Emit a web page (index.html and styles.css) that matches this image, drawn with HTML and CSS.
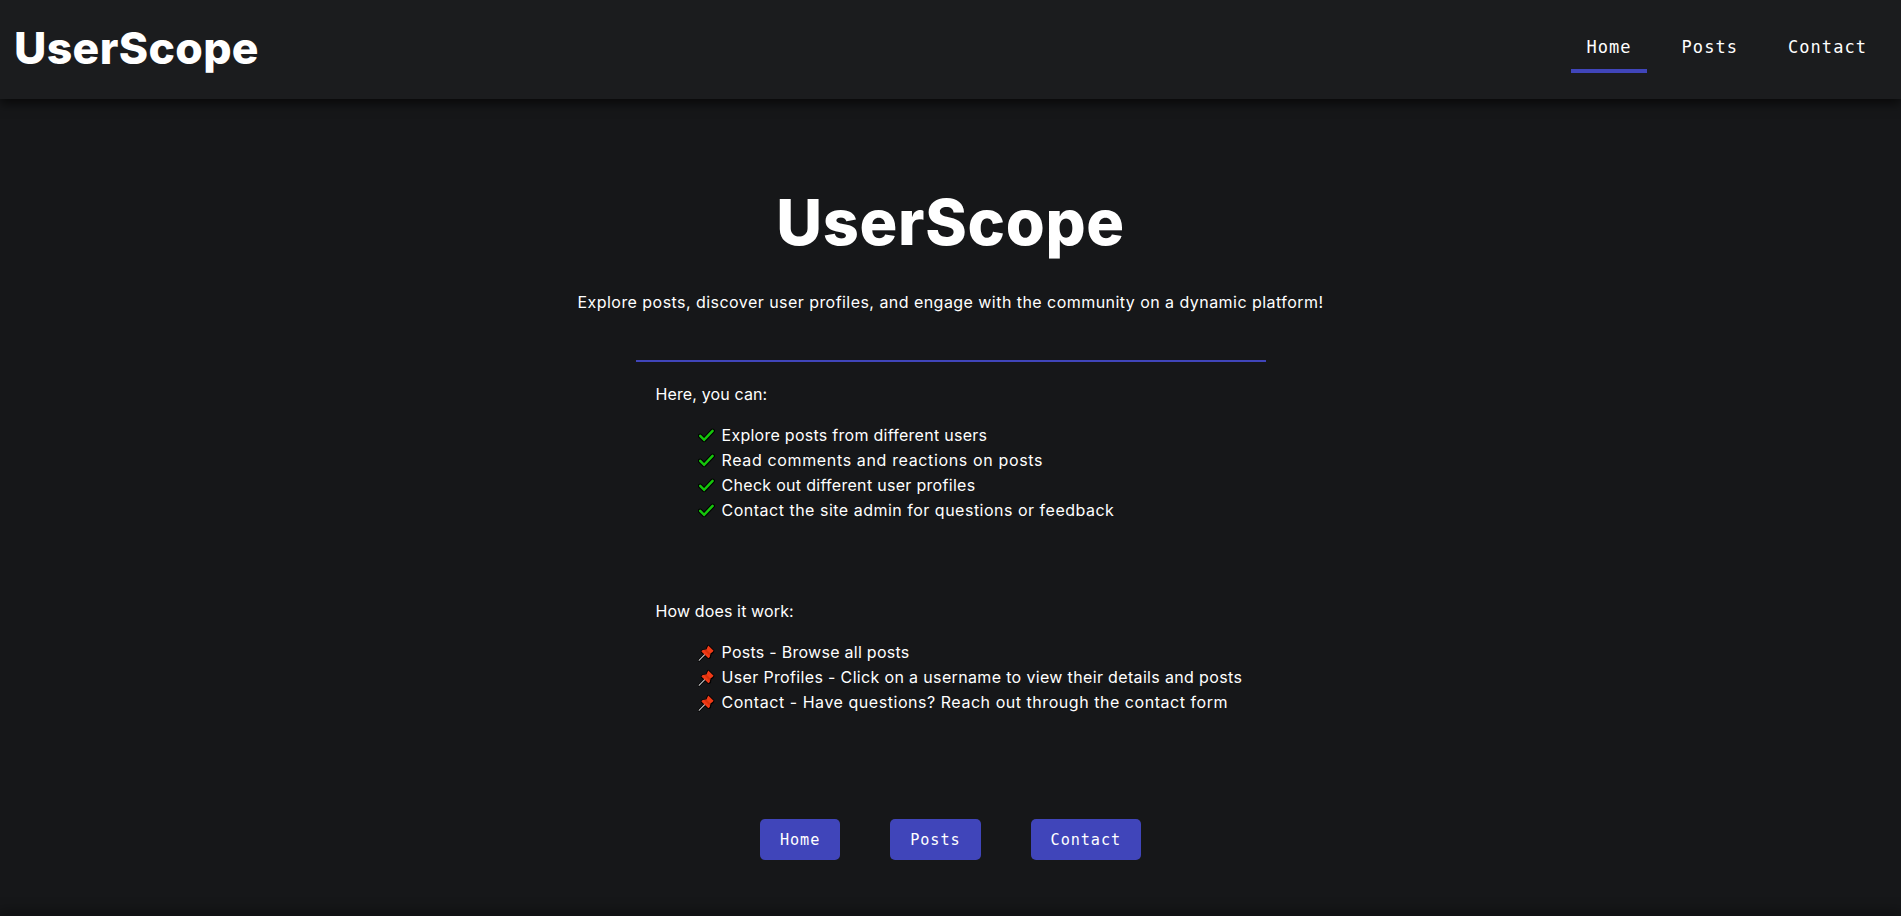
FILE: index.html
```
<!DOCTYPE html>
<html lang="en">
<head>
<meta charset="utf-8">
<title>UserScope</title>
<link rel="stylesheet" href="styles.css">
</head>
<body>
<svg class="defs" aria-hidden="true">
  <symbol id="check" viewBox="0 0 18 16">
    <path d="M2.2 7.9 6.1 11.8 14.6 2.9" fill="none" stroke="#000" stroke-width="4.6" stroke-linejoin="round" stroke-linecap="round"/>
    <path d="M2.2 7.9 6.1 11.8 14.6 2.9" fill="none" stroke="#16c60c" stroke-width="2.5" stroke-linecap="round"/>
  </symbol>
  <symbol id="pin" viewBox="0 0 18 18">
    <path d="M10.3 1.8 15.4 6.9 14.6 8.4 12.6 9.6 12 13.4 10.5 14 3.8 8 4.6 6.6 8.6 5.8 9.4 3.6Z" fill="#000" stroke="#000" stroke-width="2" stroke-linejoin="round"/>
    <path d="M7.2 10.2 1 16.4" stroke="#000" stroke-width="2.6" stroke-linecap="round"/>
    <path d="M7.2 10.2 .8 16.6" stroke="#c9c9c9" stroke-width="1.1"/>
    <path d="M10.3 1.4 15.6 6.7 14.5 8.1 12.4 9.5 11.8 12.9 10.4 14.2 3.4 7.4 4.6 6.1 8.4 5.5 9.4 3.2Z" fill="#f03a17"/>
    <path d="M8.4 5.5 12.4 9.5 11.9 12 6 6Z" fill="#ca2b00" opacity=".6"/>
  </symbol>
</svg>
<header class="header">
  <div class="logo">UserScope</div>
  <nav class="nav">
    <a class="nav-link active">Home</a>
    <a class="nav-link">Posts</a>
    <a class="nav-link">Contact</a>
  </nav>
</header>
<main class="main">
  <h1 class="title">UserScope</h1>
  <p class="lead">Explore posts, discover user profiles, and engage with the community on a dynamic platform!</p>
  <section class="info">
    <p class="heading">Here, you can:</p>
    <ul class="list">
      <li class="explore"><svg class="icon"><use href="#check"/></svg><span>Explore posts from different users</span></li>
      <li class="read"><svg class="icon"><use href="#check"/></svg><span>Read comments and reactions on posts</span></li>
      <li class="profiles"><svg class="icon"><use href="#check"/></svg><span>Check out different user profiles</span></li>
      <li class="admin"><svg class="icon"><use href="#check"/></svg><span>Contact the site admin for questions or feedback</span></li>
    </ul>
    <p class="heading second">How does it work:</p>
    <ul class="list">
      <li class="browse"><svg class="icon pin"><use href="#pin"/></svg><span>Posts - Browse all posts</span></li>
      <li class="details"><svg class="icon pin"><use href="#pin"/></svg><span>User Profiles - Click on a username to view their details and posts</span></li>
      <li class="form"><svg class="icon pin"><use href="#pin"/></svg><span>Contact - Have questions? Reach out through the contact form</span></li>
    </ul>
  </section>
  <div class="actions">
    <a class="button">Home</a>
    <a class="button">Posts</a>
    <a class="button">Contact</a>
  </div>
</main>
<footer class="footer"></footer>
</body>
</html>
```
FILE: styles.css
```
* { box-sizing: border-box; margin: 0; padding: 0; }
body {
  display: flex;
  flex-direction: column;
  height: 100vh;
  overflow: hidden;
  background: #161719;
  color: #fff;
  font: 16px/25px Inter, "Open Sans", sans-serif;
}
.defs { position: absolute; width: 0; height: 0; }
.header {
  display: flex;
  align-items: center;
  justify-content: space-between;
  flex: none;
  height: 99px;
  padding: 0 19px 0 14px;
  background: #1b1c1e;
  box-shadow: 0 5px 10px rgba(0, 0, 0, .6);
}
.logo {
  margin-bottom: 3px;
  font-size: 44.5px;
  font-weight: 800;
  line-height: 96px;
  letter-spacing: .35px;
  white-space: nowrap;
}
.nav { display: flex; gap: 20px; margin-bottom: 3px; }
.nav-link {
  padding: 12px 15px 9px;
  border-bottom: 4px solid transparent;
  font: 17px/25px "DejaVu Sans Mono", monospace;
  letter-spacing: 1.05px;
}
.nav-link.active { border-color: #4045ba; }
.main {
  flex: 1;
  display: flex;
  flex-direction: column;
  align-items: center;
}
.title { margin-top: 73px; font-size: 63px; line-height: 100px; font-weight: 800; letter-spacing: .7px; }
.lead { margin-top: 18px; white-space: nowrap; letter-spacing: .453px; }
.info {
  width: 630px;
  margin-top: 45px;
  padding: 20px 20px 0;
  border-top: 2px solid #4045ba;
}
.heading { letter-spacing: .13px; }
.heading.second { margin-top: 76px; }
.list { margin-top: 16px; padding-left: 42px; list-style: none; }
.list li { display: flex; align-items: center; white-space: nowrap; }
.explore, .browse { letter-spacing: .27px; }
.read { letter-spacing: .64px; }
.profiles { letter-spacing: .3px; }
.admin { letter-spacing: .5px; }
.details { letter-spacing: .345px; }
.form { letter-spacing: .54px; }
.icon { width: 18px; height: 16px; margin-right: 6px; flex: none; }
.icon.pin { height: 18px; }
.actions { display: flex; gap: 50px; margin-top: 104px; }
.button {
  padding: 9px 20px 7px;
  border-radius: 5px;
  background: #4045ba;
  font: 15.2px/25px "DejaVu Sans Mono", monospace;
  letter-spacing: .93px;
}
.footer { flex: none; height: 0; box-shadow: 0 0 14px 3px rgba(0, 0, 0, .6); }
```
